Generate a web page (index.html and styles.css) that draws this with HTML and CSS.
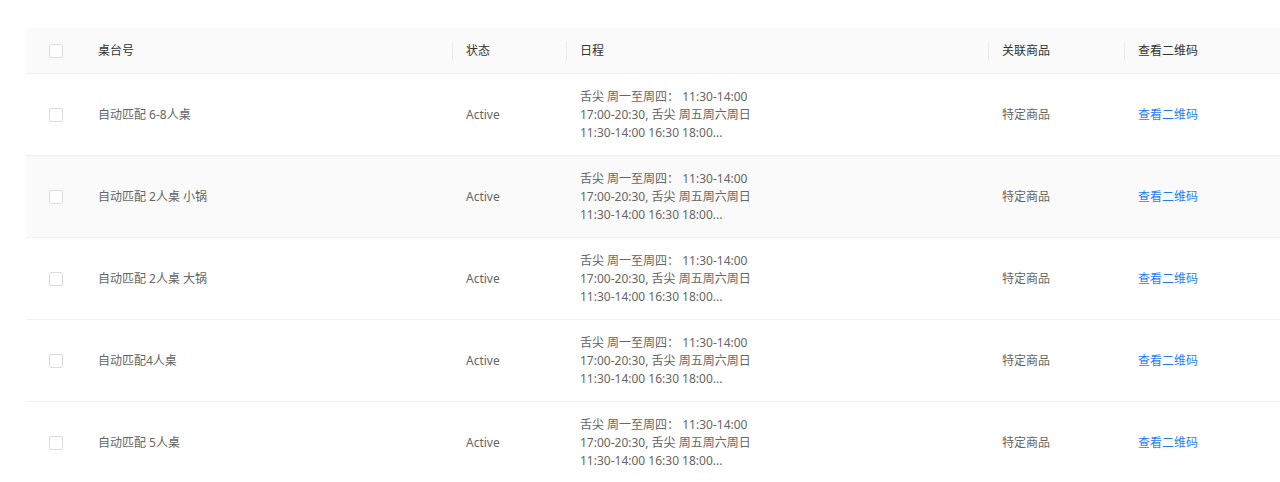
FILE: index.html
```html
<!DOCTYPE html>
<html lang="zh-CN">
<head>
<meta charset="utf-8">
<title>桌台列表</title>
<link rel="stylesheet" href="styles.css">
</head>
<body>
<div class="page">
  <table class="tbl">
    <colgroup>
      <col class="c-check"><col class="c-name"><col class="c-status"><col class="c-sched"><col class="c-goods"><col class="c-qr">
    </colgroup>
    <thead>
      <tr>
        <th class="check"><span class="box"></span></th>
        <th>桌台号</th>
        <th class="sep status">状态</th>
        <th class="sep">日程</th>
        <th class="sep">关联商品</th>
        <th class="sep">查看二维码</th>
      </tr>
    </thead>
    <tbody>
      <tr>
        <td class="check"><span class="box"></span></td>
        <td>自动匹配 6-8人桌</td>
        <td class="status">Active</td>
        <td class="sched">舌尖 周一至周四：&nbsp;11:30-14:00<br>17:00-20:30, 舌尖 周五周六周日<br>11:30-14:00 16:30 18:00...</td>
        <td>特定商品</td>
        <td><a class="link" href="#">查看二维码</a></td>
      </tr>
      <tr class="hover">
        <td class="check"><span class="box"></span></td>
        <td>自动匹配 2人桌 小锅</td>
        <td class="status">Active</td>
        <td class="sched">舌尖 周一至周四：&nbsp;11:30-14:00<br>17:00-20:30, 舌尖 周五周六周日<br>11:30-14:00 16:30 18:00...</td>
        <td>特定商品</td>
        <td><a class="link" href="#">查看二维码</a></td>
      </tr>
      <tr>
        <td class="check"><span class="box"></span></td>
        <td>自动匹配 2人桌 大锅</td>
        <td class="status">Active</td>
        <td class="sched">舌尖 周一至周四：&nbsp;11:30-14:00<br>17:00-20:30, 舌尖 周五周六周日<br>11:30-14:00 16:30 18:00...</td>
        <td>特定商品</td>
        <td><a class="link" href="#">查看二维码</a></td>
      </tr>
      <tr>
        <td class="check"><span class="box"></span></td>
        <td>自动匹配4人桌</td>
        <td class="status">Active</td>
        <td class="sched">舌尖 周一至周四：&nbsp;11:30-14:00<br>17:00-20:30, 舌尖 周五周六周日<br>11:30-14:00 16:30 18:00...</td>
        <td>特定商品</td>
        <td><a class="link" href="#">查看二维码</a></td>
      </tr>
      <tr>
        <td class="check"><span class="box"></span></td>
        <td>自动匹配 5人桌</td>
        <td class="status">Active</td>
        <td class="sched">舌尖 周一至周四：&nbsp;11:30-14:00<br>17:00-20:30, 舌尖 周五周六周日<br>11:30-14:00 16:30 18:00...</td>
        <td>特定商品</td>
        <td><a class="link" href="#">查看二维码</a></td>
      </tr>
    </tbody>
  </table>
</div>
</body>
</html>
```

FILE: styles.css
```css
html, body {
  margin: 0;
  padding: 0;
  background: #fff;
  overflow: hidden;
}
body {
  font-family: "Noto Sans", "Noto Sans CJK SC", sans-serif;
  font-size: 12px;
  color: #666;
}
.page {
  padding: 28px 0 0 26px;
}
.tbl {
  width: 1254px;
  border-collapse: collapse;
  table-layout: fixed;
}
.c-check { width: 58px; }
.c-name { width: 369px; }
.c-status { width: 113px; }
.c-sched { width: 422px; }
.c-goods { width: 136px; }
.c-qr { width: 156px; }

.tbl th {
  background: #fafafa;
  color: #333;
  font-weight: 400;
  text-align: left;
  height: 45px;
  padding: 0 14px;
  border-bottom: 1px solid #f0f0f0;
  position: relative;
  line-height: 18px;
}
.tbl th.sep::before {
  content: "";
  position: absolute;
  left: 0;
  top: 13px;
  width: 1px;
  height: 20px;
  background: #ececec;
}
.tbl th.status::before {
  left: -1px;
}
.tbl td {
  height: 81px;
  padding: 0 14px;
  border-bottom: 1px solid #f0f0f0;
  line-height: 18px;
  vertical-align: middle;
}
.tbl .status {
  padding-left: 13px;
}
.tbl tr.hover td {
  background: #fafafa;
}
.tbl .check {
  padding: 0 0 0 23px;
  text-align: left;
}
.box {
  display: inline-block;
  width: 12px;
  height: 12px;
  border: 1px solid #dcdcdc;
  border-radius: 2px;
  background: #fff;
  vertical-align: middle;
}
.sched {
  padding-top: 1px;
}
.link {
  color: #1f7ff0;
  text-decoration: none;
}
```
